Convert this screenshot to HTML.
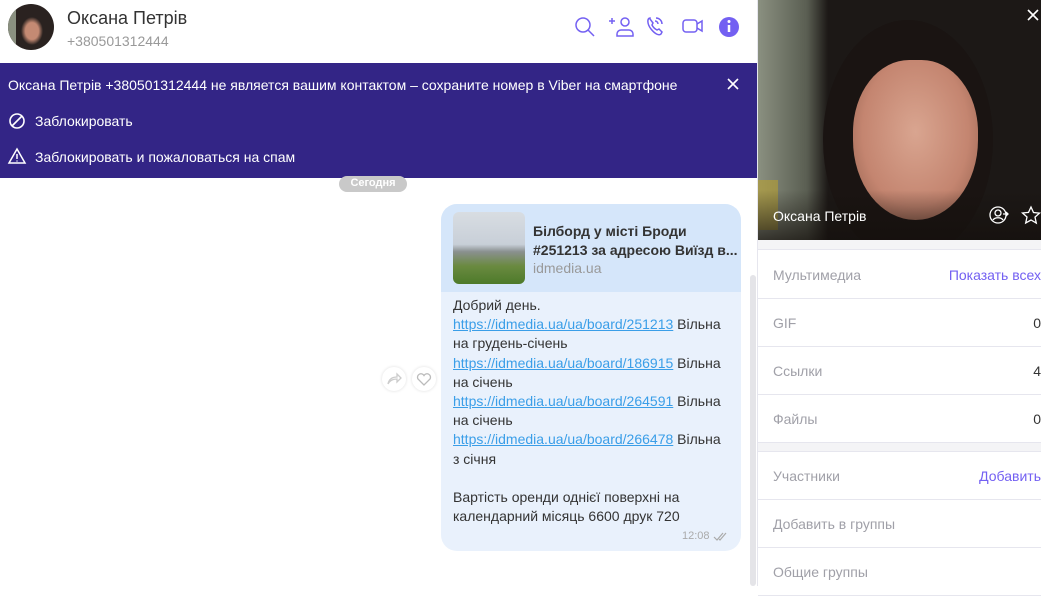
<!DOCTYPE html>
<html><head><meta charset="utf-8"><style>
*{margin:0;padding:0;box-sizing:border-box}
body{width:1041px;height:586px;overflow:hidden;font-family:"Liberation Sans","DejaVu Sans",sans-serif;background:#fff;position:relative}
.a{position:absolute}
.ban{color:#fff;font-size:14px}
.msg{font-size:14px;color:#333;line-height:19.2px}
.msg a{color:#3a9ee8;text-decoration:underline}
.row{position:absolute;left:758px;width:283px;height:48px;border-bottom:1px solid #e6e6ee;font-size:14px;color:#a0a0a8}
.row span{position:absolute;left:15px;top:16px}
.row b{position:absolute;right:0;top:16px;font-weight:normal;color:#333}
.row i{position:absolute;right:0;top:16px;font-style:normal;color:#7360f2}
.tl{white-space:nowrap;overflow:hidden}
</style></head><body>
<div class="a" style="left:8px;top:4px;width:46px;height:46px;border-radius:50%;background:radial-gradient(ellipse 11px 14px at 24px 27px,#c48a73 0 60%,#2a2220 100%),#2a2220;overflow:hidden"><div style="position:absolute;left:0;top:0;width:8px;height:46px;background:#8a9080"></div></div>
<div class="a" style="left:67px;top:8px;font-size:18px;color:#333">Оксана Петрів</div>
<div class="a" style="left:67px;top:33px;font-size:14px;color:#999">+380501312444</div>
<svg class="a" style="left:570px;top:12px" width="180" height="30" fill="none" stroke="#7360f2" stroke-width="1.5">
<circle cx="13" cy="13" r="7"/><path d="M18 18l6 6"/>
<path d="M42 6v6M39 9h6"/><circle cx="55" cy="10" r="4"/><path d="M47 24v-2a4 4 0 0 1 4-4h8a4 4 0 0 1 4 4v2z"/>
<path d="M80 6c-3 0-3 6 1 11s8 7 10 5l1-2-3-3-2 1c-2-1-4-3-5-5l1-2-3-4z"/><path d="M86 6a6 6 0 0 1 6 6M85 9a3 3 0 0 1 3 3"/>
<rect x="113" y="8" width="14" height="12" rx="3"/><path d="M127 12l5-3v10l-5-3"/>
<circle cx="159" cy="15" r="10" fill="#7360f2" stroke="none"/><path d="M159 13v7" stroke="#fff" stroke-width="2.5"/><circle cx="159" cy="9.5" r="1.5" fill="#fff" stroke="none"/>
</svg>
<div class="a" style="left:0;top:63px;width:757px;height:115px;background:#332586"></div>
<div class="a ban" style="left:8px;top:77px">Оксана Петрів +380501312444 не является вашим контактом – сохраните номер в Viber на смартфоне</div>
<svg class="a" style="left:726px;top:77px" width="14" height="14" stroke="#fff" stroke-width="1.6"><path d="M2 2l10 10M12 2L2 12"/></svg>
<svg class="a" style="left:8px;top:112px" width="18" height="18" fill="none" stroke="#fff" stroke-width="1.6"><circle cx="9" cy="9" r="7"/><path d="M4 14L14 4"/></svg>
<div class="a ban" style="left:35px;top:113px">Заблокировать</div>
<svg class="a" style="left:7px;top:147px" width="20" height="18" fill="none" stroke="#fff" stroke-width="1.5"><path d="M10 2L18 16H2z"/><path d="M10 7v5M10 13.5v1"/></svg>
<div class="a ban" style="left:35px;top:149px">Заблокировать и пожаловаться на спам</div>
<div class="a" style="left:339px;top:176px;width:68px;height:16px;border-radius:8px;background:#c9c9c9;color:#fff;font-size:11px;font-weight:bold;text-align:center;line-height:15px">Сегодня</div>
<div class="a" style="left:750px;top:275px;width:6px;height:311px;background:#e4e4e8;border-radius:3px"></div>
<div class="a" style="left:382px;top:367px;width:24px;height:24px;border-radius:50%;background:#fff;box-shadow:0 0 3px #ddd"></div>
<svg class="a" style="left:386px;top:372px" width="16" height="14" fill="none" stroke="#ccc" stroke-width="1.3"><path d="M2 12c1-5 4-7 9-7V2l4 4-4 4V7c-4 0-7 1-9 5z"/></svg>
<div class="a" style="left:412px;top:367px;width:24px;height:24px;border-radius:50%;background:#fff;box-shadow:0 0 3px #ddd"></div>
<svg class="a" style="left:416px;top:372px" width="16" height="14" fill="none" stroke="#bbb" stroke-width="1.3"><path d="M8 13L2 7a3.2 3.2 0 0 1 6-3.5A3.2 3.2 0 0 1 14 7z"/></svg>
<div class="a" style="left:441px;top:204px;width:300px;height:347px;border-radius:16px;background:#e9f1fc;overflow:hidden">
<div style="height:88px;background:#d5e6fa"></div></div>
<div class="a" style="left:453px;top:212px;width:72px;height:72px;border-radius:6px;background:linear-gradient(180deg,#d8dde2 0,#c8cfd8 45%,#8a9090 55%,#6a8a40 75%,#4d7a2a 100%)"></div>
<div class="a" style="left:533px;top:222px;font-size:14px;font-weight:bold;color:#333;line-height:19px"><div class="tl">Білборд у місті Броди</div><div class="tl">#251213 за адресою Виїзд в...</div></div>
<div class="a" style="left:533px;top:260px;font-size:14px;color:#999">idmedia.ua</div>
<div class="a msg" style="left:453px;top:296px">Добрий день.<br><a>https://idmedia.ua/ua/board/251213</a> Вільна<br>на грудень-січень<br><a>https://idmedia.ua/ua/board/186915</a> Вільна<br>на січень<br><a>https://idmedia.ua/ua/board/264591</a> Вільна<br>на січень<br><a>https://idmedia.ua/ua/board/266478</a> Вільна<br>з січня<br><br>Вартість оренди однієї поверхні на<br>календарний місяць 6600 друк 720</div>
<div class="a" style="left:682px;top:530px;font-size:11px;color:#aaa">12:08</div>
<svg class="a" style="left:713px;top:531px" width="16" height="10" fill="none" stroke="#aaa" stroke-width="1.2"><path d="M1 6l3 3 6-7M6 8l1 1 6-7"/></svg>
<div class="a" style="left:757px;top:0;width:1px;height:586px;background:#e6e6ee"></div>
<div class="a" style="left:758px;top:0;width:283px;height:240px;background:#1c1816;overflow:hidden">
<div style="position:absolute;left:0;top:0;width:70px;height:240px;background:linear-gradient(90deg,#8a9080,#5a5e52 70%,#1c1816)"></div>
<div style="position:absolute;left:0;top:180px;width:20px;height:50px;background:#b8a030;opacity:.6"></div>
<div style="position:absolute;left:65px;top:20px;width:170px;height:240px;border-radius:50%;background:#1a1412"></div>
<div style="position:absolute;left:95px;top:60px;width:125px;height:160px;border-radius:45% 45% 50% 50%;background:radial-gradient(ellipse at 50% 45%,#d9a590 0,#c48570 60%,#8a5a48 100%)"></div>
<div style="position:absolute;left:0;top:190px;width:283px;height:50px;background:linear-gradient(180deg,transparent,rgba(20,15,12,.7))"></div>
</div>
<svg class="a" style="left:1026px;top:8px" width="14" height="14" stroke="#fff" stroke-width="1.6"><path d="M2 2l10 10M12 2L2 12"/></svg>
<div class="a" style="left:773px;top:208px;color:#fff;font-size:14px">Оксана Петрів</div>
<svg class="a" style="left:988px;top:205px" width="53" height="20" fill="none" stroke="#fff" stroke-width="1.3"><circle cx="10" cy="10" r="8"/><circle cx="10" cy="8" r="3"/><path d="M5 15c2-3 8-3 10 0"/><path d="M15 9h5M18 7l2 2-2 2"/><path d="M43 2l2.5 5.5 6 .6-4.5 4 1.3 6L43 15l-5.3 3 1.3-6-4.5-4 6-.6z"/></svg>
<div class="a" style="left:758px;top:240px;width:283px;height:10px;background:#f4f4f6;border-bottom:1px solid #e6e6ee"></div>
<div class="row" style="top:251px"><span>Мультимедиа</span><i>Показать всех</i></div>
<div class="row" style="top:299px"><span>GIF</span><b>0</b></div>
<div class="row" style="top:347px"><span>Ссылки</span><b>4</b></div>
<div class="row" style="top:395px"><span>Файлы</span><b>0</b></div>
<div class="a" style="left:758px;top:443px;width:283px;height:9px;background:#f4f4f6;border-bottom:1px solid #e6e6ee"></div>
<div class="row" style="top:452px"><span>Участники</span><i>Добавить</i></div>
<div class="row" style="top:500px"><span>Добавить в группы</span></div>
<div class="row" style="top:548px"><span>Общие группы</span></div>
</body></html>
